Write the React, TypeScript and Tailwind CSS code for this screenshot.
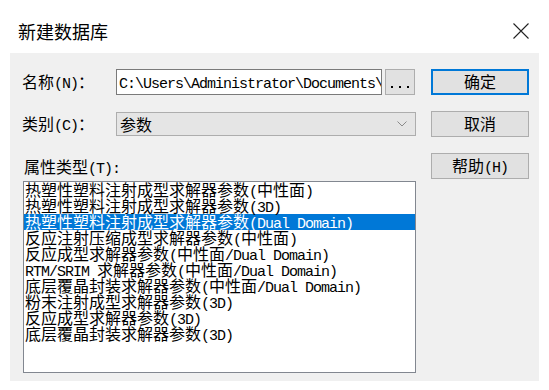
import React from 'react';

const cjk = "font-['Noto_Sans_CJK_SC',sans-serif]";

// SimSun-like mix: ASCII runs half width (8px), CJK full width (16px)
const Mixed: React.FC<{ text: string }> = ({ text }) => {
  const parts = text.split(/([\x20-\x7e]+)/).filter(Boolean);
  return (
    <>
      {parts.map((p, i) =>
        /^[\x20-\x7e]+$/.test(p) ? (
          <span key={i} className="font-['Liberation_Mono',monospace] text-[15px] tracking-[-1px] whitespace-pre">
            {p}
          </span>
        ) : (
          <span key={i}>{p}</span>
        )
      )}
    </>
  );
};

const items = [
  '热塑性塑料注射成型求解器参数(中性面)',
  '热塑性塑料注射成型求解器参数(3D)',
  '热塑性塑料注射成型求解器参数(Dual Domain)',
  '反应注射压缩成型求解器参数(中性面)',
  '反应成型求解器参数(中性面/Dual Domain)',
  'RTM/SRIM 求解器参数(中性面/Dual Domain)',
  '底层覆晶封装求解器参数(中性面/Dual Domain)',
  '粉末注射成型求解器参数(3D)',
  '反应成型求解器参数(3D)',
  '底层覆晶封装求解器参数(3D)',
];

const Btn: React.FC<{ label: string; focused?: boolean }> = ({ label, focused }) => (
  <div
    className={`h-[26px] flex items-center justify-center bg-[#e1e1e1] text-black ${
      focused ? 'border-2 border-[#0078d7]' : 'border border-[#adadad]'
    }`}
  >
    <div className="h-[18px] text-[16px] leading-[16px] whitespace-nowrap">
      <Mixed text={label} />
    </div>
  </div>
);

export default function App() {
  return (
    <div className={`w-[549px] h-[390px] bg-white ${cjk} text-black`}>
      {/* title bar */}
      <div className="h-[53px] flex items-center justify-between pl-[18px] pr-[20px] pt-[8px]">
        <span className="text-[18px] leading-[20px]">新建数据库</span>
        <svg width="16" height="16" viewBox="0 0 16 16">
          <path d="M0.5 0.5 L15.5 15.5 M15.5 0.5 L0.5 15.5" stroke="#222" strokeWidth="1.1" fill="none" />
        </svg>
      </div>

      {/* body */}
      <div className="mx-[10px] h-[328px] bg-[#f0f0f0] pt-[16px] pl-[12px] flex gap-[15px]">
        <div className="w-[394px] flex flex-col">
          <div className="h-[26px] flex items-center">
            <div className="w-[94px] h-[18px] text-[16px] leading-[16px] whitespace-nowrap">
              <Mixed text="名称(N)：" />
            </div>
            <div className="w-[266px] h-[26px] border border-[#7a7a7a] bg-white overflow-hidden flex items-center pl-[2px]">
              <div className="h-[18px] text-[16px] leading-[16px] whitespace-nowrap">
                <Mixed text={'C:\\Users\\Administrator\\Documents\\'} />
              </div>
            </div>
            <div className="ml-[3px] w-[30px] h-[26px] border border-[#adadad] bg-[#e1e1e1] flex items-end justify-center pb-[6px]">
              <div className="flex gap-[6px]">
                <span className="w-[2px] h-[2px] bg-black" />
                <span className="w-[2px] h-[2px] bg-black" />
                <span className="w-[2px] h-[2px] bg-black" />
              </div>
            </div>
          </div>

          <div className="mt-[17px] h-[24px] flex items-center">
            <div className="w-[94px] h-[18px] text-[16px] leading-[16px] whitespace-nowrap">
              <Mixed text="类别(C)：" />
            </div>
            <div className="w-[300px] h-[24px] border border-[#adadad] bg-[#e5e5e5] flex items-center justify-between pl-[3px] pr-[8px] text-[16px] leading-[16px]">
              <span>参数</span>
              <svg width="10" height="6" viewBox="0 0 10 6">
                <path d="M0.5 0.5 L5 5 L9.5 0.5" stroke="#8a8a8a" strokeWidth="1" fill="none" />
              </svg>
            </div>
          </div>

          <div className="mt-[22px] pl-[2px] h-[16px] text-[16px] leading-[16px] whitespace-nowrap">
            <Mixed text="属性类型(T):" />
          </div>

          <div className="mt-[7px] ml-[1px] w-[393px] h-[192px] border border-[#828790] bg-white overflow-hidden">
            {items.map((it, i) => (
              <div
                key={i}
                className={`h-[16px] pl-[1px] text-[16px] leading-[14px] whitespace-nowrap ${
                  i === 2 ? 'bg-[#0078d7] text-white' : 'text-black'
                }`}
              >
                <Mixed text={it} />
              </div>
            ))}
          </div>
        </div>

        <div className="w-[98px] flex flex-col gap-[16px]">
          <Btn label="确定" focused />
          <Btn label="取消" />
          <Btn label="帮助(H)" />
        </div>
      </div>
    </div>
  );
}
